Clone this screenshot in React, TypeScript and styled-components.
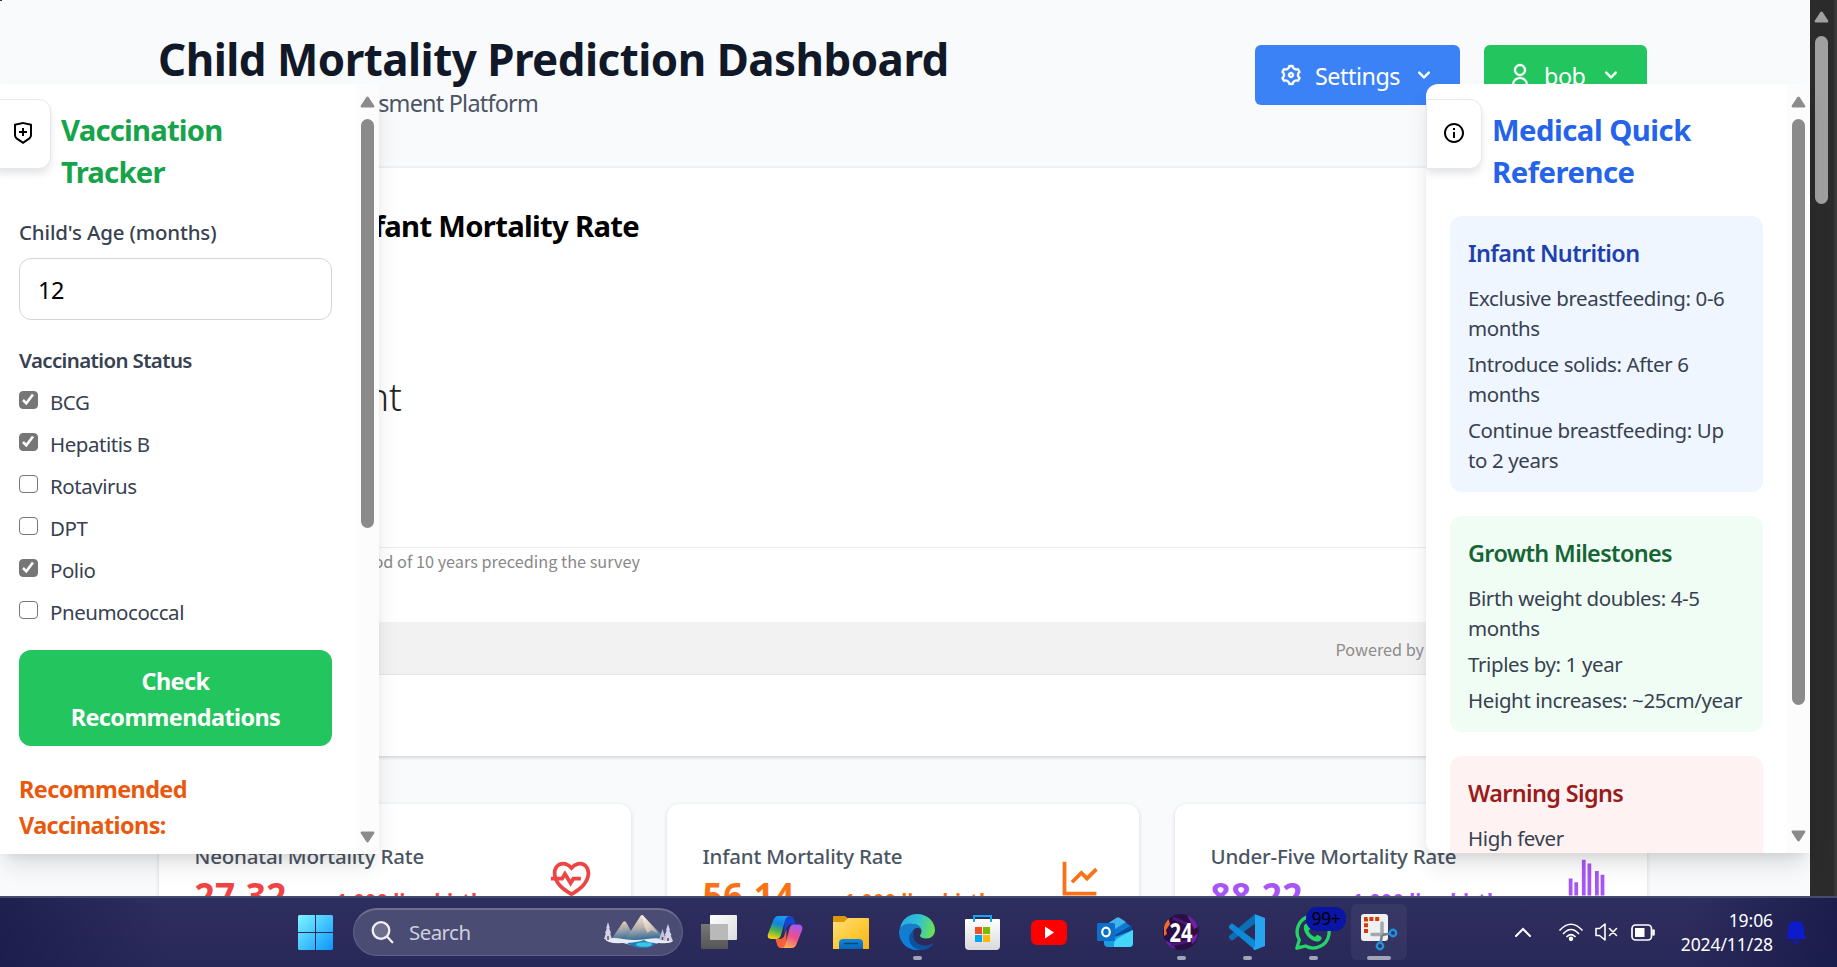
import React from 'react';
import styled, { createGlobalStyle, css } from 'styled-components';
import {
  RiBarChartGroupedLine,
  RiHeartPulseLine,
  RiInformationLine,
  RiLineChartLine,
  RiSettings3Line,
  RiShieldCrossLine,
  RiUserLine,
} from 'react-icons/ri';

const GlobalStyle = createGlobalStyle`
  *, *::before, *::after { box-sizing: border-box; }
  body { margin: 0; overflow: hidden; font-family: "Segoe UI", "Noto Sans", sans-serif; }
  h1, h2, h3, h4, p { margin: 0; }
`;

const type = (size: number, weight: number, spacing = 0) => css`
  font-size: ${size * 0.975}px;
  font-weight: ${weight};
  letter-spacing: ${spacing}px;
`;

const Screen = styled.div`
  width: 1837px;
  height: 967px;
  display: flex;
  flex-direction: column;
  overflow: hidden;
`;

const Browser = styled.div`
  position: relative;
  display: flex;
  height: 896px;
  overflow: hidden;
  background: #f9fafb;
`;

const Page = styled.main`
  flex: 1;
  padding: 33px 163px 0 159px;
  background: #f9fafc;
  overflow: hidden;
`;

/* ---------- header ---------- */

const Header = styled.header`
  display: flex;
  justify-content: space-between;
  height: 135px;
`;

const Title = styled.h1`
  ${type(45, 700, -0.51)}
  margin-left: -1px;
  line-height: 53px;
  color: #111827;
  white-space: nowrap;
`;

const Subtitle = styled.p`
  ${type(24, 400, -0.78)}
  margin-top: -1px;
  line-height: 36px;
  width: 379px;
  text-align: right;
  color: #4b5563;
  white-space: nowrap;
`;

const Actions = styled.div`
  display: flex;
  gap: 24px;
  padding-top: 12px;
`;

const ActionButton = styled.button<{ $color: string }>`
  display: flex;
  align-items: center;
  gap: 12px;
  height: 60px;
  padding: 0 24px;
  border: 0;
  border-radius: 6px;
  background: ${(p) => p.$color};
  color: #fff;
  font-family: inherit;
`;

const ActionLabel = styled.span<{ $width: number }>`
  ${type(24, 400, -0.5)}
  width: ${(p) => p.$width}px;
  padding-top: 2px;
  line-height: 36px;
  text-align: left;
  white-space: nowrap;
`;

/* ---------- main card ---------- */

const RateCard = styled.section`
  display: flex;
  flex-direction: column;
  height: 588px;
  padding-bottom: 81px;
  background: #fff;
  border-radius: 12px;
  box-shadow: 0 1px 4px rgba(0, 0, 0, 0.2);
`;

const RateTitle = styled.h2`
  ${type(30, 700, -0.7)}
  width: 480px;
  padding-top: 37px;
  line-height: 42px;
  color: #000;
  text-align: right;
  white-space: nowrap;
`;

const Embed = styled.div`
  display: flex;
  flex-direction: column;
  flex: 1;
`;

const EmbedText = styled.p`
  height: 300px;
  width: 243px;
  padding-top: 124px;
  font-weight: 300;
  font-size: 38px;
  line-height: 50px;
  text-align: right;
  color: #252423;
`;

const Footnote = styled.p`
  width: 481px;
  padding-top: 1px;
  font-family: "Noto Sans CJK SC", sans-serif;
  font-size: 16.3px;
  line-height: 24px;
  text-align: right;
  color: #888;
  white-space: nowrap;
`;

const Rule = styled.div`
  height: 1px;
  background: #ececec;
`;

const PoweredBar = styled.div`
  height: 53px;
  padding: 0 223px 0 0;
  background: #f3f2f2;
  border-bottom: 1px solid #e6e6e6;
  font-family: "Noto Sans CJK SC", sans-serif;
  font-size: 16.2px;
  line-height: 54px;
  text-align: right;
  color: #8c8c8c;
`;

/* ---------- stat cards ---------- */

const Stats = styled.section`
  display: grid;
  grid-template-columns: repeat(3, 1fr);
  gap: 36px;
  padding-top: 48px;
`;

const StatCard = styled.article`
  display: flex;
  justify-content: space-between;
  height: 150px;
  padding: 37px 37px 36px 35.5px;
  border-radius: 12px;
  background: #fff;
  box-shadow: 0 1px 4px rgba(0, 0, 0, 0.14);
`;

const StatLabel = styled.h3`
  ${type(21, 500, -0.19)}
  line-height: 30px;
  color: #4b5563;
`;

const StatValue = styled.p<{ $color: string }>`
  ${type(36, 700, 0.4)}
  line-height: 48px;
  color: ${(p) => p.$color};
  white-space: nowrap;
`;

const StatUnit = styled.span`
  ${type(21, 700, -0.1)}
  padding-left: 10px;
`;

const StatIcon = styled.div<{ $color: string }>`
  display: flex;
  padding-top: 15px;
  font-size: 45px;
  color: ${(p) => p.$color};
`;

/* ---------- floating panels ---------- */

const Panel = styled.aside<{ $side: 'left' | 'right' }>`
  position: absolute;
  top: 84px;
  ${(p) => (p.$side === 'left' ? 'left: 0; width: 379px; height: 770px;' : 'left: 1426px; width: 384px; height: 769px;')}
  display: flex;
  justify-content: space-between;
  overflow: hidden;
  background: #fff;
  border-radius: ${(p) => (p.$side === 'left' ? '0' : '12px 0 0 12px')};
`;

const PanelShadow = styled.div<{ $side: 'left' | 'right' }>`
  position: absolute;
  top: 84px;
  ${(p) => (p.$side === 'left' ? 'left: 0; width: 379px;' : 'left: 1426px; width: 384px;')}
  height: 769px;
  border-radius: 12px;
  box-shadow: 0 15px 23px -4px rgba(0, 0, 0, 0.13), 0 6px 9px -3px rgba(0, 0, 0, 0.06);
`;

const PanelToggle = styled.button<{ $side: 'left' | 'right' }>`
  position: absolute;
  top: 15px;
  left: ${(p) => (p.$side === 'left' ? '-5px' : '0')};
  display: flex;
  align-items: center;
  justify-content: center;
  width: 56px;
  height: 70px;
  padding: 0 1px 3px 0;
  border: 1px solid #e2e8f0;
  border-radius: 0 12px 12px 0;
  background: #fff;
  color: #000;
  font-size: 24px;
  box-shadow: 0 5px 8px -1px rgba(0, 0, 0, 0.12);
`;

const TrackerBody = styled.div`
  width: 332px;
  padding: 25px 0 0 19px;
`;

const PanelTitle = styled.h2<{ $color: string; $indent: number; $gap: number; $spacing: number }>`
  ${type(30, 700)}
  letter-spacing: ${(p) => p.$spacing}px;
  margin-bottom: ${(p) => p.$gap}px;
  padding-left: ${(p) => p.$indent}px;
  line-height: 42px;
  color: ${(p) => p.$color};
  white-space: pre-line;
`;

const FieldLabel = styled.label`
  ${type(21, 500, -0.15)}
  display: block;
  line-height: 30px;
  color: #374151;
`;

const AgeInput = styled.input`
  ${type(24, 400, -0.5)}
  display: block;
  width: 313px;
  height: 62px;
  margin: 11px 0 25px;
  padding: 1px 18px 0 18px;
  border: 1px solid #d1d5db;
  border-radius: 12px;
  background: #fff;
  color: #000;
  font-family: inherit;
`;

const GroupTitle = styled.h4`
  ${type(21, 600, -0.62)}
  margin-bottom: 12px;
  line-height: 30px;
  color: #374151;
`;

const VaccineList = styled.div`
  display: flex;
  flex-direction: column;
  gap: 12px;
  margin-bottom: 23px;
`;

const VaccineRow = styled.label`
  ${type(21, 400, -0.45)}
  display: flex;
  gap: 12px;
  height: 30px;
  line-height: 30px;
  color: #374151;
`;

const CheckBox = styled.span<{ $on: boolean }>`
  display: flex;
  width: 19px;
  height: 18px;
  margin-top: 4px;
  border: 1.5px solid #767676;
  border-radius: 4px;
  background: ${(p) => (p.$on ? '#767676' : '#fff')};
`;

const CheckButton = styled.button`
  ${type(24, 700, -0.58)}
  display: block;
  width: 313px;
  height: 96px;
  margin-bottom: 24px;
  padding: 2px 36px 0;
  border: 0;
  border-radius: 12px;
  background: #22c55e;
  color: #fff;
  font-family: inherit;
  line-height: 36px;
`;

const Recommended = styled.h3`
  ${type(24, 700, -0.58)}
  padding-top: 1px;
  line-height: 36px;
  color: #ea580c;
  white-space: pre-line;
`;

const ReferenceBody = styled.div`
  width: 337px;
  padding: 25px 0 0 24px;
`;

const InfoList = styled.div`
  display: flex;
  flex-direction: column;
  gap: 24px;
`;

const InfoCard = styled.section<{ $bg: string }>`
  padding: 19px 0 17px 18px;
  border-radius: 12px;
  background: ${(p) => p.$bg};
`;

const InfoTitle = styled.h3<{ $color: string }>`
  ${type(24, 600, -0.64)}
  margin-bottom: 12px;
  line-height: 36px;
  color: ${(p) => p.$color};
`;

const InfoItem = styled.p`
  ${type(21, 400, -0.37)}
  line-height: 30px;
  color: #374151;
  white-space: pre;
  & + & { margin-top: 6px; }
`;

/* ---------- scrollbars ---------- */

const Track = styled.div<{ $dark?: boolean }>`
  display: flex;
  flex-direction: column;
  align-items: center;
  width: ${(p) => (p.$dark ? 27 : 23)}px;
  padding-right: ${(p) => (p.$dark ? 1 : 0)}px;
  border-right: ${(p) => (p.$dark ? '3px solid #383838' : '0')};
  background: ${(p) => (p.$dark ? '#2b2b2b' : '#fcfcfc')};
  color: ${(p) => (p.$dark ? '#a0a0a0' : '#8b8b8b')};
`;

const Thumb = styled.div<{ $height: number }>`
  width: 13px;
  height: ${(p) => p.$height}px;
  border-radius: 7px;
  background: currentColor;
`;

const ArrowUp = styled.svg<{ $top: number; $gap: number }>`
  flex: none;
  margin: ${(p) => p.$top}px 0 ${(p) => p.$gap}px;
`;

const ArrowDown = styled.svg`
  flex: none;
  margin: auto 0 11px;
`;

const ScreenCorner = styled.div`
  position: absolute;
  top: 0;
  left: 0;
  width: 2px;
  height: 1px;
  background: #333;
`;

function Scrollbar({ thumb, dark }: { thumb: number; dark?: boolean }) {
  return (
    <Track $dark={dark}>
      <ArrowUp $top={dark ? 11 : 12} $gap={dark ? 13 : 11} width="15" height="12" viewBox="0 0 15 12" fill="currentColor">
        <path d="M6.3 1.2q1.2-1.6 2.4 0l5.4 8.2q.9 2-1 2H1.9q-1.9 0-1-2z" />
      </ArrowUp>
      <Thumb $height={thumb} />
      {!dark && (
        <ArrowDown width="15" height="12" viewBox="0 0 15 12" fill="currentColor">
          <path d="M6.3 10.8q1.2 1.6 2.4 0l5.4-8.2q.9-2-1-2H1.9q-1.9 0-1 2z" />
        </ArrowDown>
      )}
    </Track>
  );
}

/* ---------- taskbar ---------- */

const Taskbar = styled.footer`
  display: flex;
  align-items: center;
  height: 71px;
  padding: 0 31px 1px 298px;
  border-top: 2px solid #474b6c;
  background: linear-gradient(90deg, rgba(20, 22, 70, 0.6), transparent 9%, transparent 92%, rgba(20, 22, 70, 0.7)),
    linear-gradient(#2c2f5f, #2d2b5b 45%, #272959);
  color: #fff;
`;

const StartIcon = styled.svg`
  margin-right: 20px;
`;

const Search = styled.div`
  ${type(21, 400, -0.55)}
  display: flex;
  align-items: center;
  width: 330px;
  height: 48px;
  margin-right: 8px;
  padding: 0 8px 1px 17px;
  border: 1px solid #606386;
  border-top: 2px solid #6c6f90;
  border-radius: 24px;
  background: #4a4c73;
  color: #cfd0de;
`;

const SearchLabel = styled.span`
  flex: 1;
  padding: 0 0 1px 15px;
`;

const Apps = styled.div`
  display: flex;
  gap: 10px;
`;

const AppSlot = styled.div<{ $active?: boolean }>`
  position: relative;
  display: flex;
  flex-direction: column;
  align-items: center;
  width: 56px;
  height: 56px;
  padding-top: 10px;
  border-radius: 6px;
  background: ${(p) => (p.$active ? 'rgba(255,255,255,0.05)' : 'transparent')};
`;

const Indicator = styled.i<{ $wide?: boolean }>`
  width: ${(p) => (p.$wide ? 24 : 9)}px;
  height: 5px;
  margin-top: 6px;
  border-radius: 3px;
  background: #a2a3b8;
`;

const UnreadBadge = styled.span`
  position: absolute;
  top: 3px;
  left: 21px;
  width: 40px;
  height: 24px;
  border-radius: 11px;
  background: #0b15a3;
  color: #000;
  font-size: 17.5px;
  letter-spacing: -0.3px;
  line-height: 23px;
  text-align: center;
`;

const Tray = styled.div`
  display: flex;
  align-items: center;
  margin-left: auto;
`;

const TrayIcon = styled.svg<{ $gap: number }>`
  margin-right: ${(p) => p.$gap}px;
`;

const Clock = styled.div`
  ${type(18, 400, -0.1)}
  margin-right: 13px;
  padding-bottom: 1px;
  line-height: 24px;
  text-align: right;
`;

const AppArt = styled.svg`
  flex: none;
  display: block;
  width: 36px;
  height: 36px;
`;

const stats = [
  { label: 'Neonatal Mortality Rate', value: '27.32', color: '#ef4444', Icon: RiHeartPulseLine },
  { label: 'Infant Mortality Rate', value: '56.14', color: '#f97316', Icon: RiLineChartLine },
  { label: 'Under-Five Mortality Rate', value: '88.22', color: '#a855f7', Icon: RiBarChartGroupedLine },
];

const vaccines: [string, boolean][] = [
  ['BCG', true],
  ['Hepatitis B', true],
  ['Rotavirus', false],
  ['DPT', false],
  ['Polio', true],
  ['Pneumococcal', false],
];

const references = [
  {
    title: 'Infant Nutrition',
    bg: '#eff6ff',
    color: '#1e40af',
    items: ['Exclusive breastfeeding: 0-6\nmonths', 'Introduce solids: After 6\nmonths', 'Continue breastfeeding: Up\nto 2 years'],
  },
  {
    title: 'Growth Milestones',
    bg: '#f0fdf4',
    color: '#166534',
    items: ['Birth weight doubles: 4-5\nmonths', 'Triples by: 1 year', 'Height increases: ~25cm/year'],
  },
  { title: 'Warning Signs', bg: '#fef2f2', color: '#991b1b', items: ['High fever'] },
];

const ChevronDown = () => (
  <svg width="24" height="24" viewBox="0 0 20 20" fill="currentColor">
    <path d="M5.293 7.293a1 1 0 0 1 1.414 0L10 10.586l3.293-3.293a1 1 0 1 1 1.414 1.414l-4 4a1 1 0 0 1-1.414 0l-4-4a1 1 0 0 1 0-1.414z" />
  </svg>
);

const TaskViewArt = () => (
  <AppArt viewBox="0 0 36 36">
    <defs>
      <linearGradient id="tvBack" x1="0" y1="0" x2="0" y2="1"><stop stopColor="#777" /><stop offset="1" stopColor="#555" /></linearGradient>
      <linearGradient id="tvFront" x1="0" y1="0" x2="1" y2="1"><stop stopColor="#fff" /><stop offset="1" stopColor="#dcdcdc" /></linearGradient>
    </defs>
    <rect x="9" y="1" width="27" height="25" rx="1" fill="url(#tvFront)" />
    <rect x="0" y="10" width="27" height="25" rx="1" fill="url(#tvBack)" />
    <rect x="9" y="10" width="18" height="16" fill="#b9b9b9" />
  </AppArt>
);

const CopilotArt = () => (
  <AppArt viewBox="0 0 36 36">
    <defs>
      <linearGradient id="cpA" x1=".6" y1="0" x2=".3" y2="1"><stop stopColor="#1d9bf5" /><stop offset=".35" stopColor="#0f84dc" /><stop offset=".65" stopColor="#4fb34e" /><stop offset="1" stopColor="#f8d30d" /></linearGradient>
      <linearGradient id="cpB" x1=".7" y1="0" x2=".3" y2="1"><stop stopColor="#a557f2" /><stop offset=".5" stopColor="#ee4f8c" /><stop offset="1" stopColor="#ffac56" /></linearGradient>
    </defs>
    <path d="M18 2h5c2.500 0 3.500 1.500 4.200 4l1.300 4.500h-4c-3 0-4.500 1.500-5.300 4L17 20z" fill="#1645cf" />
    <path d="M19 34h-5c-2.500 0-3.400-1.500-4.100-4L8.500 25h4c3 0 4.200-1.500 5-4l2-6z" fill="#f4623b" />
    <path d="M23 2H11.500C8.500 2 7 4 6 7L1.200 19.500C-.2 23.500 1.500 25 4.500 25h5c2.500 0 3.700-1.400 4.500-4l4-14.500C18.800 3.500 20 2 23 2z" fill="url(#cpA)" />
    <path d="M14 34h10.500c3 0 4.500-2 5.500-5l4.900-12.500c1.300-4-.4-6-3.400-6H27c-2.500 0-3.700 1.400-4.500 4l-4 15C17.700 32.500 17 34 14 34z" fill="url(#cpB)" />
  </AppArt>
);

const FolderArt = () => (
  <AppArt viewBox="0 0 36 36">
    <defs>
      <linearGradient id="fdA" x1="0" y1="0" x2="1" y2="1"><stop stopColor="#ffe07a" /><stop offset=".5" stopColor="#fecb3b" /><stop offset="1" stopColor="#f6b317" /></linearGradient>
      <linearGradient id="fdB" x1="0" y1="0" x2="0" y2="1"><stop stopColor="#1387dc" /><stop offset="1" stopColor="#0867b8" /></linearGradient>
    </defs>
    <path d="M1 2h11l3 2.500L12 8H0V3q0-1 1-1z" fill="#dd9a08" />
    <path d="M0 8h11l4-4h20q1 0 1 1v30H0z" fill="url(#fdA)" />
    <path d="M6 35v-6q0-4 4-4h16q4 0 4 4v6z" fill="url(#fdB)" />
    <path d="M11.500 29.500h13" stroke="#06457f" strokeWidth="1.600" strokeLinecap="round" />
  </AppArt>
);

const EdgeArt = () => (
  <AppArt viewBox="0 0 36 36">
    <defs>
      <linearGradient id="egA" x1="0" y1=".3" x2="1" y2=".5"><stop stopColor="#2aa9e8" /><stop offset=".5" stopColor="#2fc2d6" /><stop offset="1" stopColor="#6be04f" /></linearGradient>
      <linearGradient id="egB" x1="0" y1="0" x2=".4" y2="1"><stop stopColor="#1a7cc4" /><stop offset="1" stopColor="#0a7fe0" /></linearGradient>
    </defs>
    <path d="M1 14C3 5 10 0 18 0c11 0 18 8 18 16 0 5-4 8.500-8.500 8.500-4 0-6.500-1.300-6.500-3 0-1 1.500-1.800 1.500-4.500 0-3.500-3.500-7-9-7C8 10 4 12 1 14z" fill="url(#egA)" />
    <path d="M0 18C0 13 5 9.500 11 9.500c6 0 11 3 11.500 7.500-.5-2-2-3.200-4-3.200-3.500 0-6 4-6 8.700C12.500 30 18 34.500 24 35c-2 .7-4 1-6 1C8 36 0 28 0 18z" fill="url(#egB)" />
    <path d="M15 17c-3 8 2.500 14.500 11 14.500 3 0 5-.8 7-1.800.8-.4 1.200.3.8.9C31 34 27.500 36 23 36c-7 0-13-5.500-13-12 0-3.500 2-6 5-7z" fill="#0d529f" />
  </AppArt>
);

const StoreArt = () => (
  <AppArt viewBox="0 0 36 36">
    <defs>
      <linearGradient id="stA" x1="0" y1="0" x2="0" y2="1"><stop stopColor="#fff" /><stop offset="1" stopColor="#d9d9dc" /></linearGradient>
    </defs>
    <path d="M0 6q0-1 1-1h33q1 0 1 1v26q0 4-4 4H4q-4 0-4-4z" fill="url(#stA)" />
    <path d="M9 8V2h17v6" fill="none" stroke="#19a4ef" strokeWidth="2" />
    <path d="M10 13h7v7h-7z" fill="#f25022" />
    <path d="M18 13h7v7h-7z" fill="#7fba00" />
    <path d="M10 21h7v7h-7z" fill="#00a4ef" />
    <path d="M18 21h7v7h-7z" fill="#ffb900" />
  </AppArt>
);

const YoutubeArt = () => (
  <AppArt viewBox="0 0 36 36">
    <rect y="6" width="36" height="25" rx="6" fill="#f00" />
    <path d="M14 12.500v12l9-6z" fill="#fff" />
  </AppArt>
);

const OutlookArt = () => (
  <AppArt viewBox="0 0 36 36">
    <path d="M6 14 19 4.500q2-1.500 4 0L35 13v4L18 26H6z" fill="#0f78d0" />
    <path d="M10 10 19.500 3.700q1.500-1 3 0L29 8 18 15z" fill="#41b4ee" />
    <path d="M18 21 35 11v5L20 26z" fill="#0a4a9c" />
    <path d="M7 23h11l18-7v13q0 4-4 4H11q-4 0-4-4z" fill="#1b9de2" />
    <path d="M17 33q-1-6 4-9l15-8v13q0 4-4 4z" fill="#45d6fb" />
    <rect y="9" width="18" height="18" rx="1.500" fill="#0c70c9" />
    <ellipse cx="9" cy="18" rx="3.800" ry="4.300" fill="none" stroke="#fff" strokeWidth="2.200" />
  </AppArt>
);

const TwentyFourArt = () => (
  <AppArt viewBox="0 0 36 36">
    <circle cx="18" cy="18" r="18" fill="#2a0f45" />
    <path d="M1 13C2 9 4 7 5.500 5L7 10 3 16l1 4-3 2z" fill="#f26a2a" />
    <path d="M24 1q8 3 11 12l-4 2zM2 26l7 4 4 5Q5 33 2 26zM28 24l7-5q-1 8-6 11z" fill="#6b22a8" />
    <path d="M10 4l14 6M8 31l18-4" stroke="#4c1878" strokeWidth="3" />
    <text x="18" y="27.500" textAnchor="middle" textLength="23" lengthAdjust="spacingAndGlyphs" fontFamily="Noto Sans, sans-serif" fontWeight="700" fontSize="27" fill="#fff">24</text>
  </AppArt>
);

const CodeArt = () => (
  <AppArt viewBox="0 0 36 36">
    <path d="M26 0 0 22q-.8 1 0 2l2 2q1 .8 2 0L28 8z" fill="#0a6fb5" />
    <path d="M26 36 0 14q-.8-1 0-2l2-2q1-.8 2 0L28 28z" fill="#0d8ad6" />
    <path d="M26 .2 36 4v28l-10 4q-1 0-2-1.500L26 32z" fill="#27a4f0" />
  </AppArt>
);

const WhatsAppArt = () => (
  <AppArt viewBox="0 0 36 36">
    <path d="M1.800 34.200 4.300 26A16 16 0 1 1 10.500 32z" fill="none" stroke="#25d366" strokeWidth="3.300" strokeLinejoin="round" />
    <path d="M9 12c1.500-3 4-3 4.800-1l1.200 3c.3 1-.2 1.500-1.500 3 1.500 3 3.500 4.700 6.500 6 1.200-1.500 1.800-2.300 2.800-1.900l3.200 1.600c1.500.8.5 4.300-3 4.800C16 28 7.500 18.500 9 12z" fill="#25d366" />
  </AppArt>
);

const SnipArt = () => (
  <AppArt viewBox="0 0 36 36" overflow="visible">
    <rect width="27" height="27" rx="3" fill="#eef0f2" />
    <path d="M5 19V5h15" fill="none" stroke="#d83b01" strokeWidth="4" strokeDasharray="4 1.800" />
    <path d="M11 20.500h12M21 9v12" stroke="#a4a8ad" strokeWidth="3.500" strokeLinecap="round" />
    <path d="M21 21l-1.500 8M21 21l8-1.500" stroke="#7a7f85" strokeWidth="2.600" />
    <circle cx="32" cy="19" r="3.200" fill="none" stroke="#1c93e0" strokeWidth="2.400" />
    <circle cx="19" cy="32" r="3.200" fill="none" stroke="#1c93e0" strokeWidth="2.400" />
  </AppArt>
);

const MountainArt = () => (
  <svg width="70" height="36" viewBox="0 0 70 36">
    <defs>
      <linearGradient id="mtA" x1=".3" y1="0" x2=".45" y2="1"><stop stopColor="#f7ead6" /><stop offset=".5" stopColor="#b9b0ad" /><stop offset="1" stopColor="#2f6b98" /></linearGradient>
      <linearGradient id="mtB" x1=".3" y1="0" x2=".5" y2="1"><stop stopColor="#f0cdb4" /><stop offset=".5" stopColor="#9aa0ae" /><stop offset="1" stopColor="#326b90" /></linearGradient>
      <linearGradient id="mtC" x1="0" y1="0" x2=".4" y2="1"><stop stopColor="#fdf6ea" /><stop offset="1" stopColor="#c9bdb2" /></linearGradient>
    </defs>
    <path d="M7 26 19 8q1.500-1.500 3 0l10 18z" fill="url(#mtB)" />
    <path d="M21 26 36.500 2q1.500-2 3 0l8.500 9 13 13-4 2z" fill="url(#mtA)" />
    <path d="m38 1 9.500 10 6 8-6-3-4 3-3-6z" fill="url(#mtC)" />
    <path d="M1 25q9-2 18 0 12 2 24 0 14-2 26 2-3 3-14 2-20 5-36 0-16 1-18-4z" fill="#e9eaf8" />
    <path d="M23 29q12-1 17-3 4 3 12 3-3 5-13 5t-16-5z" fill="#1d7db4" />
    <ellipse cx="40" cy="30.500" rx="8" ry="2.300" fill="#3fc4e4" />
    <path d="m4 8 1.800 6-.6.500L7 19l-.8.500L8 25H0l1.800-5.500L1 19l1.800-4.500-.6-.5zM64 10l2 6-.7.500L67.500 21l-.8.500L69 27h-9.500l2-5.500-.8-.5 2-4.500-.7-.5z" fill="#d3d2ea" />
    <path d="m58.500 15-3.500 11h7z" fill="#c3c2de" />
    <path d="M4 22v4M64 24v3M58.500 23v3" stroke="#6b4a45" strokeWidth="1.500" />
  </svg>
);

const apps: { Art: React.FC; running?: boolean; active?: boolean; unread?: string }[] = [
  { Art: TaskViewArt },
  { Art: CopilotArt },
  { Art: FolderArt },
  { Art: EdgeArt, running: true },
  { Art: StoreArt },
  { Art: YoutubeArt },
  { Art: OutlookArt },
  { Art: TwentyFourArt, running: true },
  { Art: CodeArt, running: true },
  { Art: WhatsAppArt, running: true, unread: '99+' },
  { Art: SnipArt, running: true, active: true },
];

export default function App() {
  return (
    <Screen>
      <GlobalStyle />
      <Browser>
        <Page>
          <Header>
            <div>
              <Title>Child Mortality Prediction Dashboard</Title>
              <Subtitle>Risk Assessment Platform</Subtitle>
            </div>
            <Actions>
              <ActionButton $color="#3b82f6">
                <RiSettings3Line size={24} stroke="currentColor" strokeWidth={0.4} />
                <ActionLabel $width={85}>Settings</ActionLabel>
                <ChevronDown />
              </ActionButton>
              <ActionButton $color="#22c55e">
                <RiUserLine size={24} stroke="currentColor" strokeWidth={0.3} />
                <ActionLabel $width={43}>bob</ActionLabel>
                <ChevronDown />
              </ActionButton>
            </Actions>
          </Header>

          <RateCard>
            <RateTitle>Infant Mortality Rate</RateTitle>
            <Embed>
              <EmbedText>Percent</EmbedText>
              <Rule />
              <Footnote>For the period of 10 years preceding the survey</Footnote>
            </Embed>
            <PoweredBar>Powered by</PoweredBar>
          </RateCard>

          <Stats>
            {stats.map(({ label, value, color, Icon }) => (
              <StatCard key={label}>
                <div>
                  <StatLabel>{label}</StatLabel>
                  <StatValue $color={color}>
                    {value}
                    <StatUnit>per 1,000 live births</StatUnit>
                  </StatValue>
                </div>
                <StatIcon $color={color}>
                  <Icon />
                </StatIcon>
              </StatCard>
            ))}
          </Stats>
        </Page>
        <Scrollbar dark thumb={168} />
        <ScreenCorner />

        <PanelShadow $side="left" />
        <Panel $side="left">
          <TrackerBody>
            <PanelTitle $color="#16a34a" $indent={42} $gap={24} $spacing={-0.78}>{'Vaccination\nTracker'}</PanelTitle>
            <FieldLabel>Child's Age (months)</FieldLabel>
            <AgeInput defaultValue="12" />
            <GroupTitle>Vaccination Status</GroupTitle>
            <VaccineList>
              {vaccines.map(([name, on]) => (
                <VaccineRow key={name}>
                  <CheckBox $on={on}>
                    {on && (
                      <svg width="16" height="15" viewBox="0 0 16 15">
                        <path d="M3 8l3.300 3.300L13 2.500" fill="none" stroke="#fff" strokeWidth="2.600" />
                      </svg>
                    )}
                  </CheckBox>
                  {name}
                </VaccineRow>
              ))}
            </VaccineList>
            <CheckButton>Check Recommendations</CheckButton>
            <Recommended>{'Recommended\nVaccinations:'}</Recommended>
          </TrackerBody>
          <Scrollbar thumb={409} />
          <PanelToggle $side="left">
            <RiShieldCrossLine />
          </PanelToggle>
        </Panel>

        <PanelShadow $side="right" />
        <Panel $side="right">
          <ReferenceBody>
            <PanelTitle $color="#2563eb" $indent={42} $gap={23} $spacing={-0.5}>{'Medical Quick\nReference'}</PanelTitle>
            <InfoList>
              {references.map((r) => (
                <InfoCard key={r.title} $bg={r.bg}>
                  <InfoTitle $color={r.color}>{r.title}</InfoTitle>
                  {r.items.map((item) => (
                    <InfoItem key={item}>{item}</InfoItem>
                  ))}
                </InfoCard>
              ))}
            </InfoList>
          </ReferenceBody>
          <Scrollbar thumb={586} />
          <PanelToggle $side="right">
            <RiInformationLine />
          </PanelToggle>
        </Panel>
      </Browser>

      <Taskbar>
        <StartIcon width="35" height="35" viewBox="0 0 35 35">
          <defs>
            <linearGradient id="win" gradientUnits="userSpaceOnUse" x1="0" y1="0" x2="35" y2="35">
              <stop stopColor="#7df5ff" />
              <stop offset="1" stopColor="#0d95ff" />
            </linearGradient>
          </defs>
          <path d="M1 0h16v17H0V1zM18 0h16l1 1v16H18zM0 18h17v17H1l-1-1zM18 18h17v16l-1 1H18z" fill="url(#win)" />
        </StartIcon>
        <Search>
          <svg width="23" height="23" viewBox="0 0 23 23" fill="none" stroke="#f0f0f5" strokeWidth="2.300" strokeLinecap="round">
            <circle cx="10" cy="9.500" r="8.300" fill="#6d6e8e" />
            <path d="m16 15.500 5.300 5.700" />
          </svg>
          <SearchLabel>Search</SearchLabel>
          <MountainArt />
        </Search>
        <Apps>
          {apps.map(({ Art, running, active, unread }, i) => (
            <AppSlot key={i} $active={active}>
              <Art />
              {running && <Indicator $wide={active} />}
              {unread && <UnreadBadge>{unread}</UnreadBadge>}
            </AppSlot>
          ))}
        </Apps>
        <Tray>
          <TrayIcon $gap={28} width="16" height="10" viewBox="0 0 16 10" fill="none" stroke="#fff" strokeWidth="2" strokeLinecap="round">
            <path d="M1 9l7-7 7 7" />
          </TrayIcon>
          <TrayIcon $gap={12} width="24" height="18" viewBox="0 0 24 18" fill="none" stroke="#fff" strokeWidth="1.700" strokeLinecap="round">
            <path d="M1 7Q12-4.500 23 7M4.500 10.500q7.500-8 15 0M8 13.500q4-4 8 0" />
            <circle cx="12" cy="15.800" r="1.400" fill="#fff" />
          </TrayIcon>
          <TrayIcon $gap={13} width="23" height="18" viewBox="0 0 23 18" fill="none" stroke="#fff" strokeWidth="1.600" strokeLinecap="round" strokeLinejoin="round">
            <path d="M1 5.500h3.500L10 1v16l-5.500-4.500H1zM14.500 5.500l7 7M21.500 5.500l-7 7" />
          </TrayIcon>
          <TrayIcon $gap={26} width="24" height="17" viewBox="0 0 24 17" fill="none" stroke="#fff" strokeWidth="1.700">
            <rect x="1" y="1" width="19.500" height="15" rx="3.500" />
            <path d="M4 4h9.500v9H4z" fill="#fff" stroke="none" />
            <path d="M22.500 6.500v4" strokeWidth="2.600" strokeLinecap="round" />
          </TrayIcon>
          <Clock>
            19:06
            <br />
            2024/11/28
          </Clock>
          <svg width="20" height="23" viewBox="0 0 20 23" fill="#0d1ccb">
            <path d="M10 0c5 0 8 3.500 8 8v5l1.700 3.500q.5 1.500-1 1.500H1.300q-1.500 0-1-1.500L2 13V8c0-4.500 3-8 8-8zM6.500 20h7q-1 2.600-3.500 2.600T6.500 20z" />
          </svg>
        </Tray>
      </Taskbar>
    </Screen>
  );
}
